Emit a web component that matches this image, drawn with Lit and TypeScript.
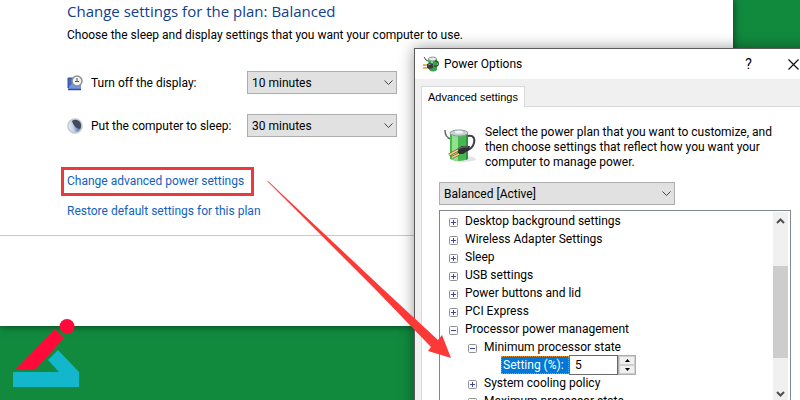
import { LitElement, html, css, svg } from "lit";
import { customElement, property } from "lit/decorators.js";

const battery = svg`
  <ellipse cx="20" cy="30" rx="12" ry="3" fill="#000" opacity=".1"/>
  <path d="M1 1 C1 6 3 9 7 10" fill="none" stroke="#63686c" stroke-width="1.500"/>
  <path d="M6 4 V30 Q15 34 24 30 V4 Z" fill="#45b850"/>
  <path d="M8 6 V30 Q11 32 14 32 V6 Z" fill="#93e08f"/>
  <path d="M22 6 V31 L24 30 V4 Z" fill="#2b9440"/>
  <ellipse cx="15" cy="4" rx="9" ry="3" fill="#c9d0d6" stroke="#8f9ba3" stroke-width="1"/>
  <ellipse cx="15" cy="3" rx="4" ry="1.500" fill="#f3f6f8"/>
  <path d="M24 7 C30 6 31 10 30 14 C29 18 27 20 23 21" fill="none" stroke="#3a4048" stroke-width="2"/>
  <path d="M13 20 L18 17 L26 17 L25 21 L19 25 L14 25 Z" fill="#2e2f33"/>
  <path d="M14 20 L19 18 L24 18" fill="none" stroke="#77787c" stroke-width="1"/>
  <path d="M14 21 L5 26 M15 25 L8 28.500" stroke="#7a5520" stroke-width="3"/>
  <path d="M14 21 L5 26 M15 25 L8 28.500" stroke="#f0cf85" stroke-width="1.500"/>`;

const plug = svg`
  <path d="M5 3 Q10 -1 14 3 L14 14 Q10 17 6 14 Z" fill="#35a44a"/>
  <path d="M8 4 H10 V7 H8 Z" fill="#93dd98"/>
  <ellipse cx="9.500" cy="3" rx="4" ry="2" fill="#e6ecea" stroke="#8d9995" stroke-width="1"/>
  <path d="M12 5 Q16 5 15 9 Q14 11 11 10" fill="none" stroke="#2f5138" stroke-width="1.500"/>
  <path d="M1 1 L3 4 L5 5" fill="none" stroke="#444" stroke-width="1"/>
  <path d="M4 8 L7 7 L10 8 L10 12 L6 13 L4 12 Z" fill="#3d3a3c"/>
  <path d="M5 9 L8 8" stroke="#8b8689" stroke-width="1"/>
  <path d="M0 9 H4 M0 12 H4" stroke="#c9a43a" stroke-width="1.5"/>`;

const displayClock = svg`
  <path d="M1 3 H9 V13 H1 Z" fill="#4169c8" stroke="#3552a4" stroke-width="1"/>
  <path d="M2 12 L8 5 H14 V14 H2 Z" fill="#6f95e3"/>
  <path d="M1 14.500 H14" stroke="#39499a" stroke-width="1.500"/>
  <circle cx="10" cy="6" r="5" fill="#f2f2ef" stroke="#8d8f95" stroke-width="1.500"/>
  <path d="M10 3 V7 M8 6.500 H12" stroke="#555" stroke-width="1"/>`;

const moon = svg`
  <defs>
    <linearGradient id="glow" x1="0" y1=".6" x2="1" y2=".4">
      <stop offset="0" stop-color="#eef2f6"/><stop offset=".35" stop-color="#c3d2e6"/>
      <stop offset=".65" stop-color="#6888b8"/><stop offset="1" stop-color="#8793a8"/>
    </linearGradient>
  </defs>
  <circle cx="8" cy="8" r="7" fill="url(#glow)" stroke="#c3c8ce" stroke-width="1.500"/>
  <path d="M5 3 Q9 0 13 4 Q15 8 13 11 Q7 10 5 3 Z" fill="#414a60"/>`;

@customElement("drop-down")
class DropDown extends LitElement {
  @property() value = "";
  @property() label = "";

  static styles = css`
    :host { display: grid; color: #000; }
    .field, .chevron { grid-area: 1 / 1; }
    .field {
      appearance: none; box-sizing: border-box; width: 100%; height: 23px; margin: 0;
      padding: 0 24px 0 4px; border: 1px solid #adadad; border-radius: 0;
      background: #e1e1e1; color: inherit; font: inherit;
    }
    .chevron { justify-self: end; align-self: center; width: 9px; height: 6px; margin-right: 4px; pointer-events: none; }
  `;

  render() {
    return html`
      <select class="field" aria-label=${this.label}><option>${this.value}</option></select>
      <svg class="chevron" viewBox="0 0 9 6"><path d="M.5 .5 L4.5 4.500 L8.500 .5" fill="none" stroke="#444"/></svg>`;
  }
}

@customElement("plan-window")
class PlanWindow extends LitElement {
  static styles = css`
    :host { display: block; background: #fff; box-shadow: 0 0 8px rgba(0, 0, 0, .6); }
    .content { padding: 0 67px; height: 236px; box-sizing: border-box; border-bottom: 1px solid #c8c8c8; }
    .title { margin: 0; font: 15px/22px "Open Sans", sans-serif; color: #10408f; }
    .intro { margin: 4px 0 24px; line-height: 18px; }
    .setting { display: grid; grid-template-columns: 16px 148px 150px; column-gap: 8px; align-items: center; height: 29px; margin-bottom: 14px; }
    .setting > svg { width: 16px; height: 16px; }
    .links { display: flex; flex-direction: column; align-items: flex-start; margin-top: 27px; }
    .link { color: #0f62c0; text-decoration: none; line-height: 23px; }
    .marked { margin: 0 0 4px -6px; padding: 0 7px 0 3px; border: 3px solid #ea3a3c; }
    .footer { height: 90px; }
  `;

  render() {
    return html`
      <div class="content">
        <h1 class="title">Change settings for the plan: Balanced</h1>
        <p class="intro">Choose the sleep and display settings that you want your computer to use.</p>
        <div class="setting">
          <svg viewBox="0 0 16 16">${displayClock}</svg><span>Turn off the display:</span>
          <drop-down label="Turn off the display" value="10 minutes"></drop-down>
        </div>
        <div class="setting">
          <svg viewBox="0 0 16 16">${moon}</svg><span>Put the computer to sleep:</span>
          <drop-down label="Put the computer to sleep" value="30 minutes"></drop-down>
        </div>
        <div class="links">
          <a class="link marked" href="#advanced">Change advanced power settings</a>
          <a class="link" href="#restore">Restore default settings for this plan</a>
        </div>
      </div>
      <div class="footer"></div>`;
  }
}

interface Item { name: string; open?: boolean; child?: boolean }

const before: Item[] = [
  { name: "Desktop background settings" },
  { name: "Wireless Adapter Settings" },
  { name: "Sleep" },
  { name: "USB settings" },
  { name: "Power buttons and lid" },
  { name: "PCI Express" },
  { name: "Processor power management", open: true },
  { name: "Minimum processor state", open: true, child: true },
];
const after: Item[] = [
  { name: "System cooling policy", child: true },
  { name: "Maximum processor state", child: true, open: true },
];

@customElement("power-dialog")
class PowerDialog extends LitElement {
  static styles = css`
    :host { display: block; background: #f0f0f0; border: 1px solid #5c5c5c; box-shadow: 0 0 14px rgba(0, 0, 0, .4); }
    .bar { display: flex; align-items: center; height: 30px; padding-left: 8px; background: #fff; }
    .bar > .app { width: 16px; height: 16px; margin-right: 5px; }
    .name { flex: 1; margin: 0; font: inherit; }
    .tool { width: 45px; height: 30px; padding: 0; border: 0; background: none; color: #000; font: inherit; font-size: 14px; display: grid; place-items: center; }
    .cross { width: 11px; height: 11px; }
    .tabs { display: flex; padding: 7px 6px 0; }
    .tab { height: 21px; padding: 0 6px; margin-bottom: -1px; border: 1px solid #d9d9d9; border-bottom: 0; background: #fff; color: #000; font: 11px "Liberation Sans", sans-serif; z-index: 1; }
    .panel { margin: 0 6px; padding: 18px 0 20px 17px; border: 1px solid #d9d9d9; background: #fff; }
    .about { display: flex; align-items: flex-start; gap: 8px; padding-left: 5px; }
    .about > svg { width: 33px; height: 33px; margin-top: 4px; flex: none; }
    .text { margin: 0; line-height: 15px; white-space: nowrap; }
    .plan { width: 236px; margin: 12px 0 5px; }
    .tree { display: flex; width: 350px; height: 192px; border: 1px solid #828790; }
    .rows { flex: 1; margin: 0; padding: 1px 0 0 9px; overflow: hidden; list-style: none; }
    .row { display: flex; align-items: center; gap: 7px; height: 18px; white-space: nowrap; }
    .child { padding-left: 19px; }
    .toggle { flex: none; width: 9px; height: 9px; margin-top: 2px; padding: 0; border: 0; background: none; display: block; }
    .toggle > svg { display: block; width: 9px; height: 9px; }
    .value { gap: 0; padding-left: 52px; }
    .picked { box-sizing: border-box; width: 68px; height: 18px; padding-left: 1px; border: 1px dotted #e08a30; background: #0078d7; color: #fff; line-height: 16px; }
    .number { box-sizing: border-box; width: 49px; height: 20px; margin: 0; padding: 0 0 0 5px; border: 1px solid #6b6b6b; background: #fff; color: #000; font: inherit; }
    .spin { box-sizing: border-box; display: grid; width: 18px; height: 20px; border: 1px solid #adadad; }
    .step { display: grid; place-items: center; min-height: 0; padding: 0; border: 1px solid #d0d0d0; background: #f0f0f0; }
    .step > svg { width: 5px; height: 3px; }
    .scroll { display: flex; flex-direction: column; width: 15px; margin: 1px 2px 1px 0; background: #f0f0f0; }
    .arrow { height: 17px; padding: 0; border: 0; background: none; display: grid; place-items: center; }
    .arrow > svg { width: 9px; height: 6px; }
    .track { flex: 1; padding-top: 37px; }
    .thumb { height: 92px; background: #cdcdcd; }
  `;

  private row(item: Item) {
    const mark = item.open ? "M2 4.5 H7" : "M2 4.5 H7 M4.5 2 V7";
    return html`<li class="row ${item.child ? "child" : ""}">
      <button class="toggle" aria-label="Toggle ${item.name}">
        <svg viewBox="0 0 9 9"><rect x=".5" y=".5" width="8" height="8" rx="1" fill="#fafafa" stroke="#919191"/><path d=${mark} stroke="#3c479b"/></svg>
      </button><span>${item.name}</span></li>`;
  }

  render() {
    return html`
      <header class="bar">
        <svg class="app" viewBox="0 0 16 16">${plug}</svg>
        <h2 class="name">Power Options</h2>
        <button class="tool">?</button>
        <button class="tool" aria-label="Close"><svg class="cross" viewBox="0 0 11 11"><path d="M.5 .5 L10.5 10.5 M10.5 .5 L.5 10.5" stroke="#111" stroke-width="1.2"/></svg></button>
      </header>
      <div class="tabs"><button class="tab">Advanced settings</button></div>
      <section class="panel">
        <div class="about">
          <svg viewBox="0 0 33 33">${battery}</svg>
          <p class="text">Select the power plan that you want to customize, and<br>
            then choose settings that reflect how you want your<br>
            computer to manage power.</p>
        </div>
        <drop-down class="plan" label="Power plan" value="Balanced [Active]"></drop-down>
        <div class="tree">
          <ul class="rows">
            ${before.map((i) => this.row(i))}
            <li class="row value">
              <label class="picked" for="percent">Setting (%):</label>
              <input class="number" id="percent" value="5" />
              <span class="spin">
                <button class="step" aria-label="Increase"><svg viewBox="0 0 5 3"><path d="M0 3 L2.5 0 L5 3 Z"/></svg></button>
                <button class="step" aria-label="Decrease"><svg viewBox="0 0 5 3"><path d="M0 0 L2.5 3 L5 0 Z"/></svg></button>
              </span>
            </li>
            ${after.map((i) => this.row(i))}
          </ul>
          <div class="scroll">
            <button class="arrow" aria-label="Scroll up"><svg viewBox="0 0 9 6"><path d="M1 5 L4.5 1.500 L8 5" fill="none" stroke="#505050" stroke-width="2"/></svg></button>
            <div class="track"><div class="thumb"></div></div>
            <button class="arrow" aria-label="Scroll down"><svg viewBox="0 0 9 6"><path d="M1 1 L4.5 4.500 L8 1" fill="none" stroke="#505050" stroke-width="2"/></svg></button>
          </div>
        </div>
      </section>`;
  }
}

@customElement("app-root")
class AppRoot extends LitElement {
  static styles = css`
    :host { display: block; position: relative; height: 100vh; overflow: hidden; background: #118a3e; font: 12px Roboto, "Open Sans", sans-serif; color: #000; }
    .main { position: absolute; left: 0; top: 0; right: 67px; }
    .dialog { position: absolute; left: 414px; top: 48px; right: -17px; }
    .logo { position: absolute; left: 12px; bottom: 12px; width: 68px; height: 70px; }
    .pointer { position: absolute; left: 267px; top: 180px; width: 185px; height: 180px; pointer-events: none; }
  `;

  render() {
    return html`
      <plan-window class="main"></plan-window>
      <power-dialog class="dialog"></power-dialog>
      <svg class="logo" viewBox="0 0 68 70">
        <path d="M1 54 H47 L36 42 L46 32 L67 54 V69 H1 Z" fill="#12b7cb"/>
        <path d="M3 52 L43 11 L52 20 L23 52 Z" fill="#ff0a3a"/>
        <circle cx="55" cy="8.5" r="7.5" fill="#ff0a3a"/>
      </svg>
      <svg class="pointer" viewBox="0 0 185 180">
        <path d="M0 1 L1 1 L117 110 L171 160 L175 155 L184 178 L161 171 L164 167 L109 110 Z" fill="#fb3a38"/>
      </svg>`;
  }
}
